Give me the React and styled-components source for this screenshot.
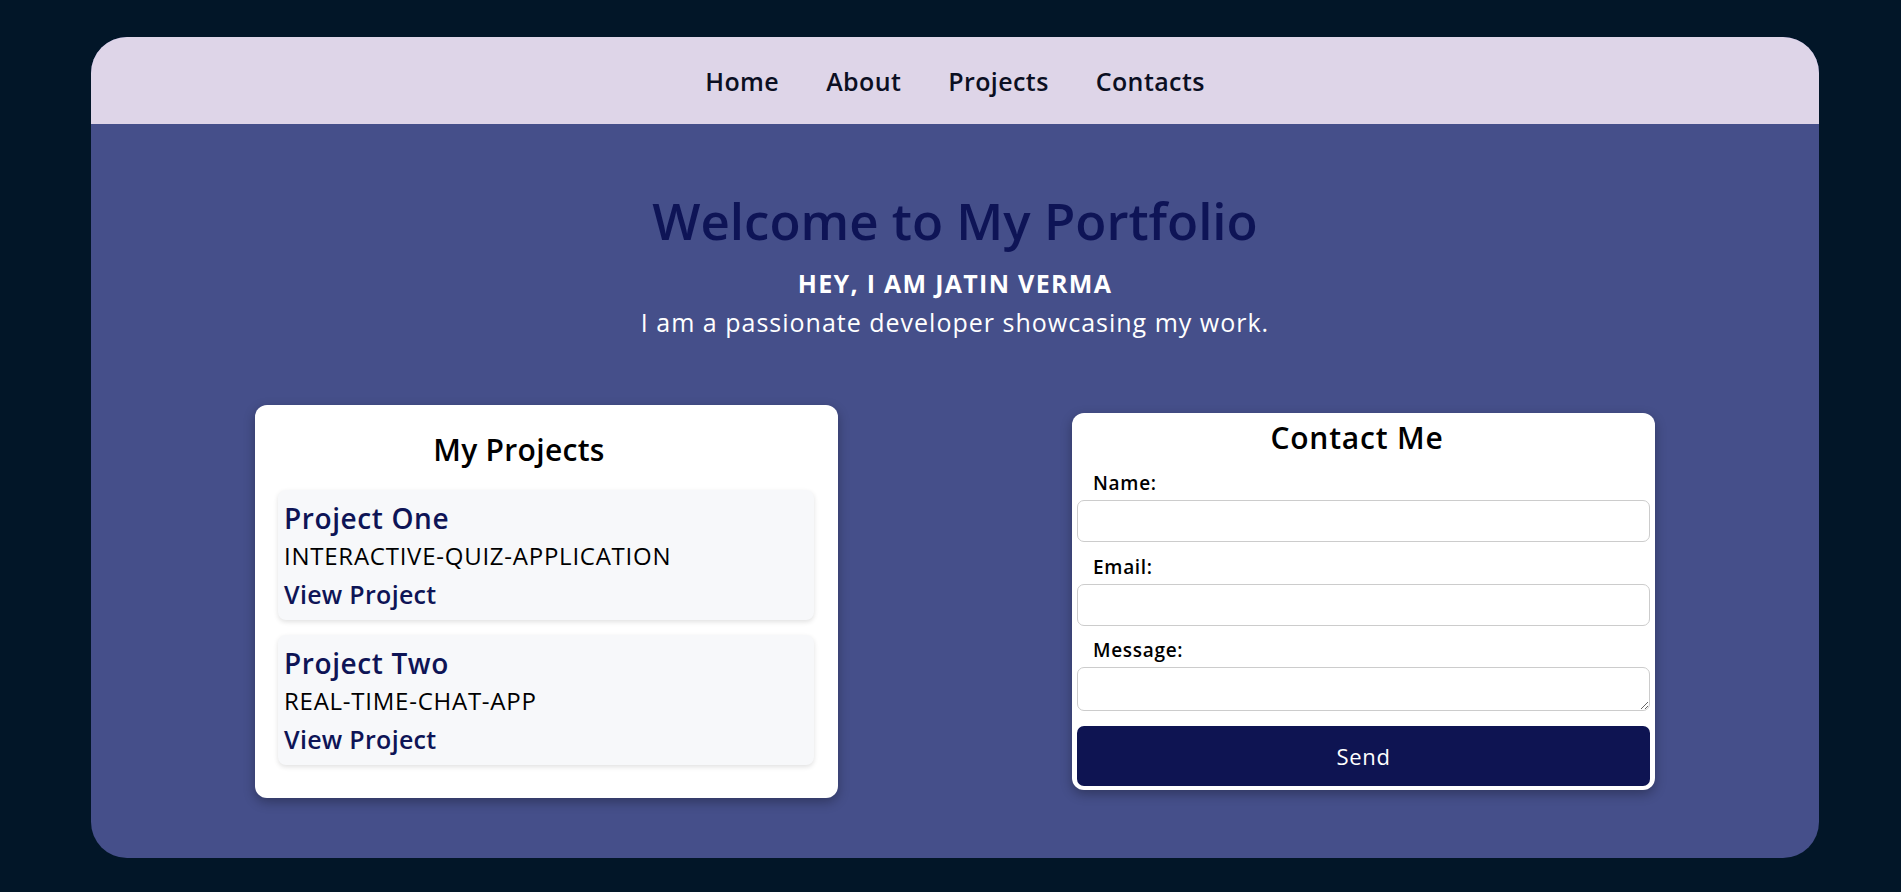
import React from "react";
import styled, { createGlobalStyle } from "styled-components";

const GlobalStyle = createGlobalStyle`
  body {
    margin: 0;
    background: #021628;
    font-family: "Open Sans", "Noto Sans", sans-serif;
  }
`;

const Page = styled.div`
  padding: 37px 82px 34px 91px;
`;

const Frame = styled.div`
  border-radius: 36px;
  overflow: hidden;
  background: #454f8a;
`;

const Nav = styled.nav`
  height: 87px;
  background: #ded5e8;
  display: flex;
  justify-content: center;
  align-items: center;
  gap: 47px;
`;

const NavLink = styled.a`
  font-size: 25px;
  font-weight: 600;
  letter-spacing: 0.4px;
  color: #0b0f22;
  text-decoration: none;
  cursor: pointer;
`;

const Main = styled.main`
  padding: 66px 0 60px;
  text-align: center;
`;

const Title = styled.h1`
  margin: 0;
  font-size: 51px;
  line-height: 60px;
  font-weight: 600;
  color: #0e1456;
`;

const Hey = styled.h3`
  margin: 18px 0 0;
  font-size: 25px;
  line-height: 30px;
  font-weight: 700;
  letter-spacing: 1.3px;
  color: #ffffff;
`;

const Intro = styled.p`
  margin: 9px 0 0;
  font-size: 25px;
  line-height: 30px;
  letter-spacing: 1px;
  color: #ffffff;
`;

const Row = styled.div`
  margin-top: 68px;
  display: flex;
  justify-content: center;
  align-items: center;
  gap: 234px;
`;

const Card = styled.section`
  width: 583px;
  box-sizing: border-box;
  background: #ffffff;
  border-radius: 12px;
  box-shadow: 0 4px 12px rgba(0, 0, 0, 0.3);
  text-align: left;
`;

const ProjectsCard = styled(Card)`
  padding: 28px 24px 33px 23px;
`;

const ContactCard = styled(Card)`
  padding: 8px 5px 4px;
`;

const CardTitle = styled.h2`
  margin: 0;
  font-size: 30px;
  line-height: 34px;
  font-weight: 600;
  letter-spacing: ${(p) => p.$spacing || 0}px;
  color: #000000;
  text-align: center;
  padding-right: ${(p) => p.$shift || 0}px;
`;

const ProjectList = styled.div`
  margin-top: 23px;
  display: flex;
  flex-direction: column;
  gap: 15px;
`;

const Project = styled.div`
  background: #f7f8fa;
  border-radius: 8px;
  padding: 9px 6px 7px;
  box-shadow: 0 2px 5px rgba(0, 0, 0, 0.12);
`;

const ProjectName = styled.h3`
  margin: 0;
  font-size: 28px;
  line-height: 38px;
  font-weight: 600;
  letter-spacing: 0.6px;
  color: #0e1456;
`;

const ProjectDesc = styled.p`
  margin: 0;
  font-size: 24px;
  line-height: 38px;
  letter-spacing: 0.75px;
  color: #000000;
`;

const ProjectLink = styled.a`
  display: block;
  font-size: 25px;
  line-height: 38px;
  font-weight: 600;
  letter-spacing: 0.3px;
  color: #0e1456;
  text-decoration: none;
`;

const Form = styled.form`
  margin-top: 16px;
  display: flex;
  flex-direction: column;
`;

const Label = styled.label`
  padding-left: 16px;
  font-size: 19px;
  line-height: 24px;
  font-weight: 600;
  letter-spacing: 0.7px;
  color: #000000;
  margin-top: ${(p) => p.$top || 0}px;
`;

const Input = styled.input`
  margin-top: 5px;
  height: 42px;
  box-sizing: border-box;
  border: 1px solid #cccccc;
  border-radius: 7px;
  font: inherit;
`;

const TextArea = styled.textarea`
  margin-top: 5px;
  height: 44px;
  box-sizing: border-box;
  border: 1px solid #cccccc;
  border-radius: 7px;
  font: inherit;
`;

const Send = styled.button`
  margin-top: 15px;
  height: 60px;
  border: none;
  border-radius: 7px;
  background: #0e1452;
  color: #ffffff;
  font-family: inherit;
  font-size: 22px;
  letter-spacing: 0.7px;
  cursor: pointer;
`;

const projects = [
  { name: "Project One", desc: "INTERACTIVE-QUIZ-APPLICATION" },
  { name: "Project Two", desc: "REAL-TIME-CHAT-APP" },
];

const App = () => {
  return (
    <Page>
      <GlobalStyle />
      <Frame>
        <Nav>
          <NavLink>Home</NavLink>
          <NavLink>About</NavLink>
          <NavLink>Projects</NavLink>
          <NavLink>Contacts</NavLink>
        </Nav>
        <Main>
          <Title>Welcome to My Portfolio</Title>
          <Hey>HEY, I AM JATIN VERMA</Hey>
          <Intro>I am a passionate developer showcasing my work.</Intro>
          <Row>
            <ProjectsCard>
              <CardTitle $shift={54} $spacing={0.3}>
                My Projects
              </CardTitle>
              <ProjectList>
                {projects.map((p) => (
                  <Project key={p.name}>
                    <ProjectName>{p.name}</ProjectName>
                    <ProjectDesc>{p.desc}</ProjectDesc>
                    <ProjectLink>View Project</ProjectLink>
                  </Project>
                ))}
              </ProjectList>
            </ProjectsCard>
            <ContactCard>
              <CardTitle $shift={13} $spacing={0.8}>
                Contact Me
              </CardTitle>
              <Form onSubmit={(e) => e.preventDefault()}>
                <Label>Name:</Label>
                <Input type="text" />
                <Label $top={13}>Email:</Label>
                <Input type="email" />
                <Label $top={12}>Message:</Label>
                <TextArea />
                <Send type="submit">Send</Send>
              </Form>
            </ContactCard>
          </Row>
        </Main>
      </Frame>
    </Page>
  );
};

export default App;
